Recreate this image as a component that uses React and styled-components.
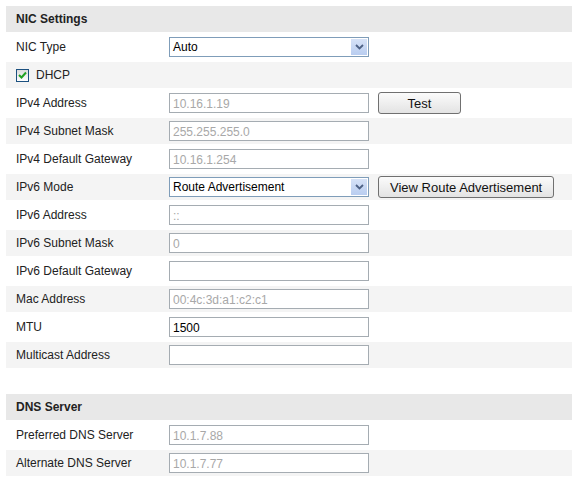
import styled, { createGlobalStyle } from "styled-components";

const GlobalStyle = createGlobalStyle`
  body {
    margin: 0;
    background: #fff;
    font-family: "Liberation Sans", Arial, sans-serif;
    font-size: 12px;
    color: #222;
  }
`;

const Page = styled.div`
  padding: 6px 1px 0 6px;
  width: 566px;
`;

const Section = styled.div`
  display: flex;
  flex-direction: column;
  gap: 2px;
  margin-bottom: ${(p) => (p.$spaced ? "26px" : "0")};
`;

const Header = styled.div`
  height: 26px;
  background: #e8e8e8;
  display: flex;
  align-items: center;
  padding-left: 10px;
  font-weight: bold;
  color: #222;
`;

const Row = styled.div`
  height: 26px;
  display: grid;
  grid-template-columns: 163px 200px auto;
  align-items: center;
  background: ${(p) => (p.$shaded ? "#f4f4f4" : "#fff")};
`;

const Label = styled.div`
  padding-left: 10px;
  color: #222;
`;

const CheckLabel = styled.label`
  grid-column: 1 / 3;
  padding-left: 10px;
  display: flex;
  align-items: center;
  gap: 7px;
  color: #222;
`;

const Box = styled.span`
  width: 11px;
  height: 11px;
  border: 1px solid #1c5180;
  background: linear-gradient(#dcdcdc, #fff);
  display: flex;
  align-items: center;
  justify-content: center;
`;

const Input = styled.input`
  box-sizing: border-box;
  width: 200px;
  height: 20px;
  margin: 0;
  padding: 1px 3px 0;
  border: 1px solid #a5acb2;
  background: #fff;
  font-family: "Liberation Sans", Arial, sans-serif;
  font-size: 12px;
  color: ${(p) => (p.disabled ? "#a8a8a8" : "#000")};
  outline: none;
`;

const SelectBox = styled.div`
  box-sizing: border-box;
  width: 200px;
  height: 20px;
  border: 1px solid #7f9db9;
  display: flex;
  align-items: stretch;
  background: #fff;
`;

const SelectText = styled.div`
  flex: 1;
  display: flex;
  align-items: center;
  padding-left: 3px;
  color: #000;
`;

const Arrow = styled.div`
  width: 16px;
  margin: 1px;
  background: linear-gradient(#d6e2f7, #b9cdf0);
  display: flex;
  align-items: center;
  justify-content: center;
`;

const Button = styled.button`
  margin-left: 9px;
  height: 22px;
  padding: 0 11px;
  min-width: ${(p) => p.$min || "auto"};
  border: 1px solid #707070;
  border-radius: 3px;
  background: linear-gradient(#fbfbfb, #e3e3e3);
  font-family: "Liberation Sans", Arial, sans-serif;
  font-size: 13px;
  color: #111;
  justify-self: start;
`;

const Select = ({ value }) => (
  <SelectBox>
    <SelectText>{value}</SelectText>
    <Arrow>
      <svg width="9" height="6" viewBox="0 0 9 6">
        <path d="M1 1 L4.5 4.5 L8 1" stroke="#4d6185" strokeWidth="1.8" fill="none" />
      </svg>
    </Arrow>
  </SelectBox>
);

const Field = ({ label, value, disabled, shaded, children }) => (
  <Row $shaded={shaded}>
    <Label>{label}</Label>
    <Input defaultValue={value} disabled={disabled} />
    {children}
  </Row>
);

export default function App() {
  return (
    <Page>
      <GlobalStyle />
      <Section $spaced>
        <Header>NIC Settings</Header>
        <Row>
          <Label>NIC Type</Label>
          <Select value="Auto" />
        </Row>
        <Row $shaded>
          <CheckLabel>
            <Box>
              <svg width="9" height="8" viewBox="0 0 9 8">
                <path d="M1 4 L3.5 6.5 L8 1.5" stroke="#21a121" strokeWidth="2" fill="none" />
              </svg>
            </Box>
            DHCP
          </CheckLabel>
        </Row>
        <Field label="IPv4 Address" value="10.16.1.19" disabled>
          <Button $min="83px">Test</Button>
        </Field>
        <Field label="IPv4 Subnet Mask" value="255.255.255.0" disabled shaded />
        <Field label="IPv4 Default Gateway" value="10.16.1.254" disabled />
        <Row $shaded>
          <Label>IPv6 Mode</Label>
          <Select value="Route Advertisement" />
          <Button>View Route Advertisement</Button>
        </Row>
        <Field label="IPv6 Address" value="::" disabled />
        <Field label="IPv6 Subnet Mask" value="0" disabled shaded />
        <Field label="IPv6 Default Gateway" value="" />
        <Field label="Mac Address" value="00:4c:3d:a1:c2:c1" disabled shaded />
        <Field label="MTU" value="1500" />
        <Field label="Multicast Address" value="" shaded />
      </Section>
      <Section>
        <Header>DNS Server</Header>
        <Field label="Preferred DNS Server" value="10.1.7.88" disabled />
        <Field label="Alternate DNS Server" value="10.1.7.77" disabled shaded />
      </Section>
    </Page>
  );
}
